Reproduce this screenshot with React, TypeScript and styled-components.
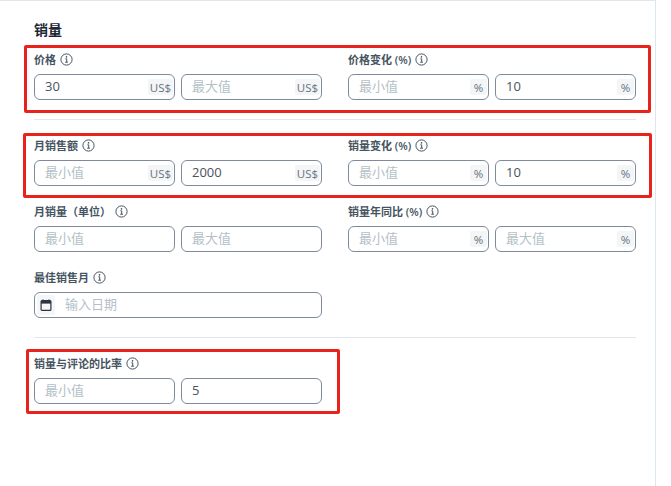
import React from "react";
import styled, { createGlobalStyle } from "styled-components";

const FONT = `"Open Sans", "Noto Sans CJK SC", sans-serif`;

const GlobalStyle = createGlobalStyle`
  html, body {
    margin: 0;
    padding: 0;
    background: #fff;
    font-family: ${FONT};
  }
`;

function InfoIcon() {
  return (
    <svg width="13" height="13" viewBox="0 0 13 13" fill="none">
      <circle cx="6.5" cy="6.5" r="5.6" stroke="#46545f" strokeWidth="1" />
      <path d="M5.4 5.8h1.3v3.2M5.2 9.2h2.8" stroke="#46545f" strokeWidth="1" />
      <circle cx="6.5" cy="3.9" r="0.8" fill="#46545f" />
    </svg>
  );
}

function CalendarIcon() {
  return (
    <svg width="12" height="12" viewBox="0 0 12 12" fill="none">
      <path d="M3 0.5v2M9 0.5v2" stroke="#2b3440" strokeWidth="1.2" />
      <rect x="1.1" y="1.6" width="9.8" height="9.8" rx="1" stroke="#2b3440" strokeWidth="1.2" />
      <rect x="1" y="1.6" width="10" height="3" fill="#2b3440" />
    </svg>
  );
}

interface RangeProps {
  min?: string;
  max?: string;
  unit?: string;
}

function RangeInputs({ min, max, unit }: RangeProps) {
  return (
    <Pair>
      <InputBox>
        <TextInput placeholder="最小值" defaultValue={min} readOnly />
        {unit && <Unit $wide={unit.length > 1}>{unit}</Unit>}
      </InputBox>
      <InputBox>
        <TextInput placeholder="最大值" defaultValue={max} readOnly />
        {unit && <Unit $wide={unit.length > 1}>{unit}</Unit>}
      </InputBox>
    </Pair>
  );
}

interface FieldProps {
  label: string;
  children: React.ReactNode;
}

function Field({ label, children }: FieldProps) {
  return (
    <FieldWrap>
      <Label>
        {label}
        <InfoIcon />
      </Label>
      {children}
    </FieldWrap>
  );
}

export default function App() {
  return (
    <>
      <GlobalStyle />
      <Page>
        <Heading>销量</Heading>
        <Row>
          <Field label="价格">
            <RangeInputs min="30" unit="US$" />
          </Field>
          <Field label="价格变化 (%)">
            <RangeInputs max="10" unit="%" />
          </Field>
        </Row>
        <Divider />
        <Row>
          <Field label="月销售额">
            <RangeInputs max="2000" unit="US$" />
          </Field>
          <Field label="销量变化 (%)">
            <RangeInputs max="10" unit="%" />
          </Field>
        </Row>
        <Row>
          <Field label="月销量（单位）">
            <RangeInputs />
          </Field>
          <Field label="销量年同比 (%)">
            <RangeInputs unit="%" />
          </Field>
        </Row>
        <Row>
          <Field label="最佳销售月">
            <InputBox>
              <CalendarSlot>
                <CalendarIcon />
              </CalendarSlot>
              <TextInput placeholder="输入日期" readOnly />
            </InputBox>
          </Field>
        </Row>
        <Divider />
        <Row>
          <Field label="销量与评论的比率">
            <RangeInputs max="5" />
          </Field>
        </Row>
        <Highlight $x={24} $y={45} $w={627} $h={68} />
        <Highlight $x={23} $y={133} $w={629} $h={65} />
        <Highlight $x={26} $y={349} $w={314} $h={65} />
      </Page>
    </>
  );
}

const Page = styled.div`
  position: relative;
  box-sizing: border-box;
  width: 656px;
  height: 486px;
  padding: 19px 19px 0 34px;
  border-top: 1px solid #e4e6e8;
  border-right: 1px solid #dbe6ef;
  background: #fff;
`;

const Heading = styled.div`
  height: 20px;
  margin-bottom: 10px;
  font-size: 14px;
  font-weight: 700;
  line-height: 20px;
  color: #1c2733;
`;

const Row = styled.div`
  display: grid;
  grid-template-columns: 288px 288px;
  column-gap: 26px;
  & + & {
    margin-top: 16px;
  }
`;

const Divider = styled.div`
  height: 1px;
  margin: 19px 0 16px;
  background: #e3e7ea;
`;

const FieldWrap = styled.div`
  display: flex;
  flex-direction: column;
  gap: 6px;
`;

const Label = styled.div`
  display: flex;
  align-items: center;
  gap: 4px;
  height: 18px;
  font-size: 11px;
  font-weight: 600;
  color: #46545f;
`;

const Pair = styled.div`
  display: grid;
  grid-template-columns: 141px 141px;
  column-gap: 6px;
`;

const InputBox = styled.div`
  display: flex;
  align-items: center;
  box-sizing: border-box;
  height: 26px;
  border: 1px solid #7d8b9c;
  border-radius: 6px;
  background: #fff;
  overflow: hidden;
`;

const TextInput = styled.input`
  flex: 1;
  min-width: 0;
  height: 100%;
  box-sizing: border-box;
  padding: 0 0 2px 10px;
  border: 0;
  outline: 0;
  background: transparent;
  font-family: ${FONT};
  font-size: 13px;
  color: #4a525b;
  &::placeholder {
    color: #b4bfc8;
    opacity: 1;
  }
`;

const Unit = styled.span<{ $wide: boolean }>`
  display: flex;
  align-items: center;
  justify-content: center;
  flex: none;
  width: ${(p) => (p.$wide ? "25px" : "17px")};
  height: 16px;
  margin-right: 1px;
  background: #f3f5f7;
  border-radius: 2px;
  font-size: 11.5px;
  color: #66737f;
`;

const CalendarSlot = styled.span`
  display: flex;
  align-items: center;
  justify-content: center;
  flex: none;
  width: 18px;
  height: 20px;
  margin-left: 2px;
  background: #f4f6f8;
  border-radius: 2px;
`;

const Highlight = styled.div<{ $x: number; $y: number; $w: number; $h: number }>`
  position: absolute;
  left: ${(p) => p.$x}px;
  top: ${(p) => p.$y - 1}px;
  box-sizing: border-box;
  width: ${(p) => p.$w}px;
  height: ${(p) => p.$h}px;
  border: 3px solid #e8231b;
  border-radius: 2px;
  pointer-events: none;
`;
